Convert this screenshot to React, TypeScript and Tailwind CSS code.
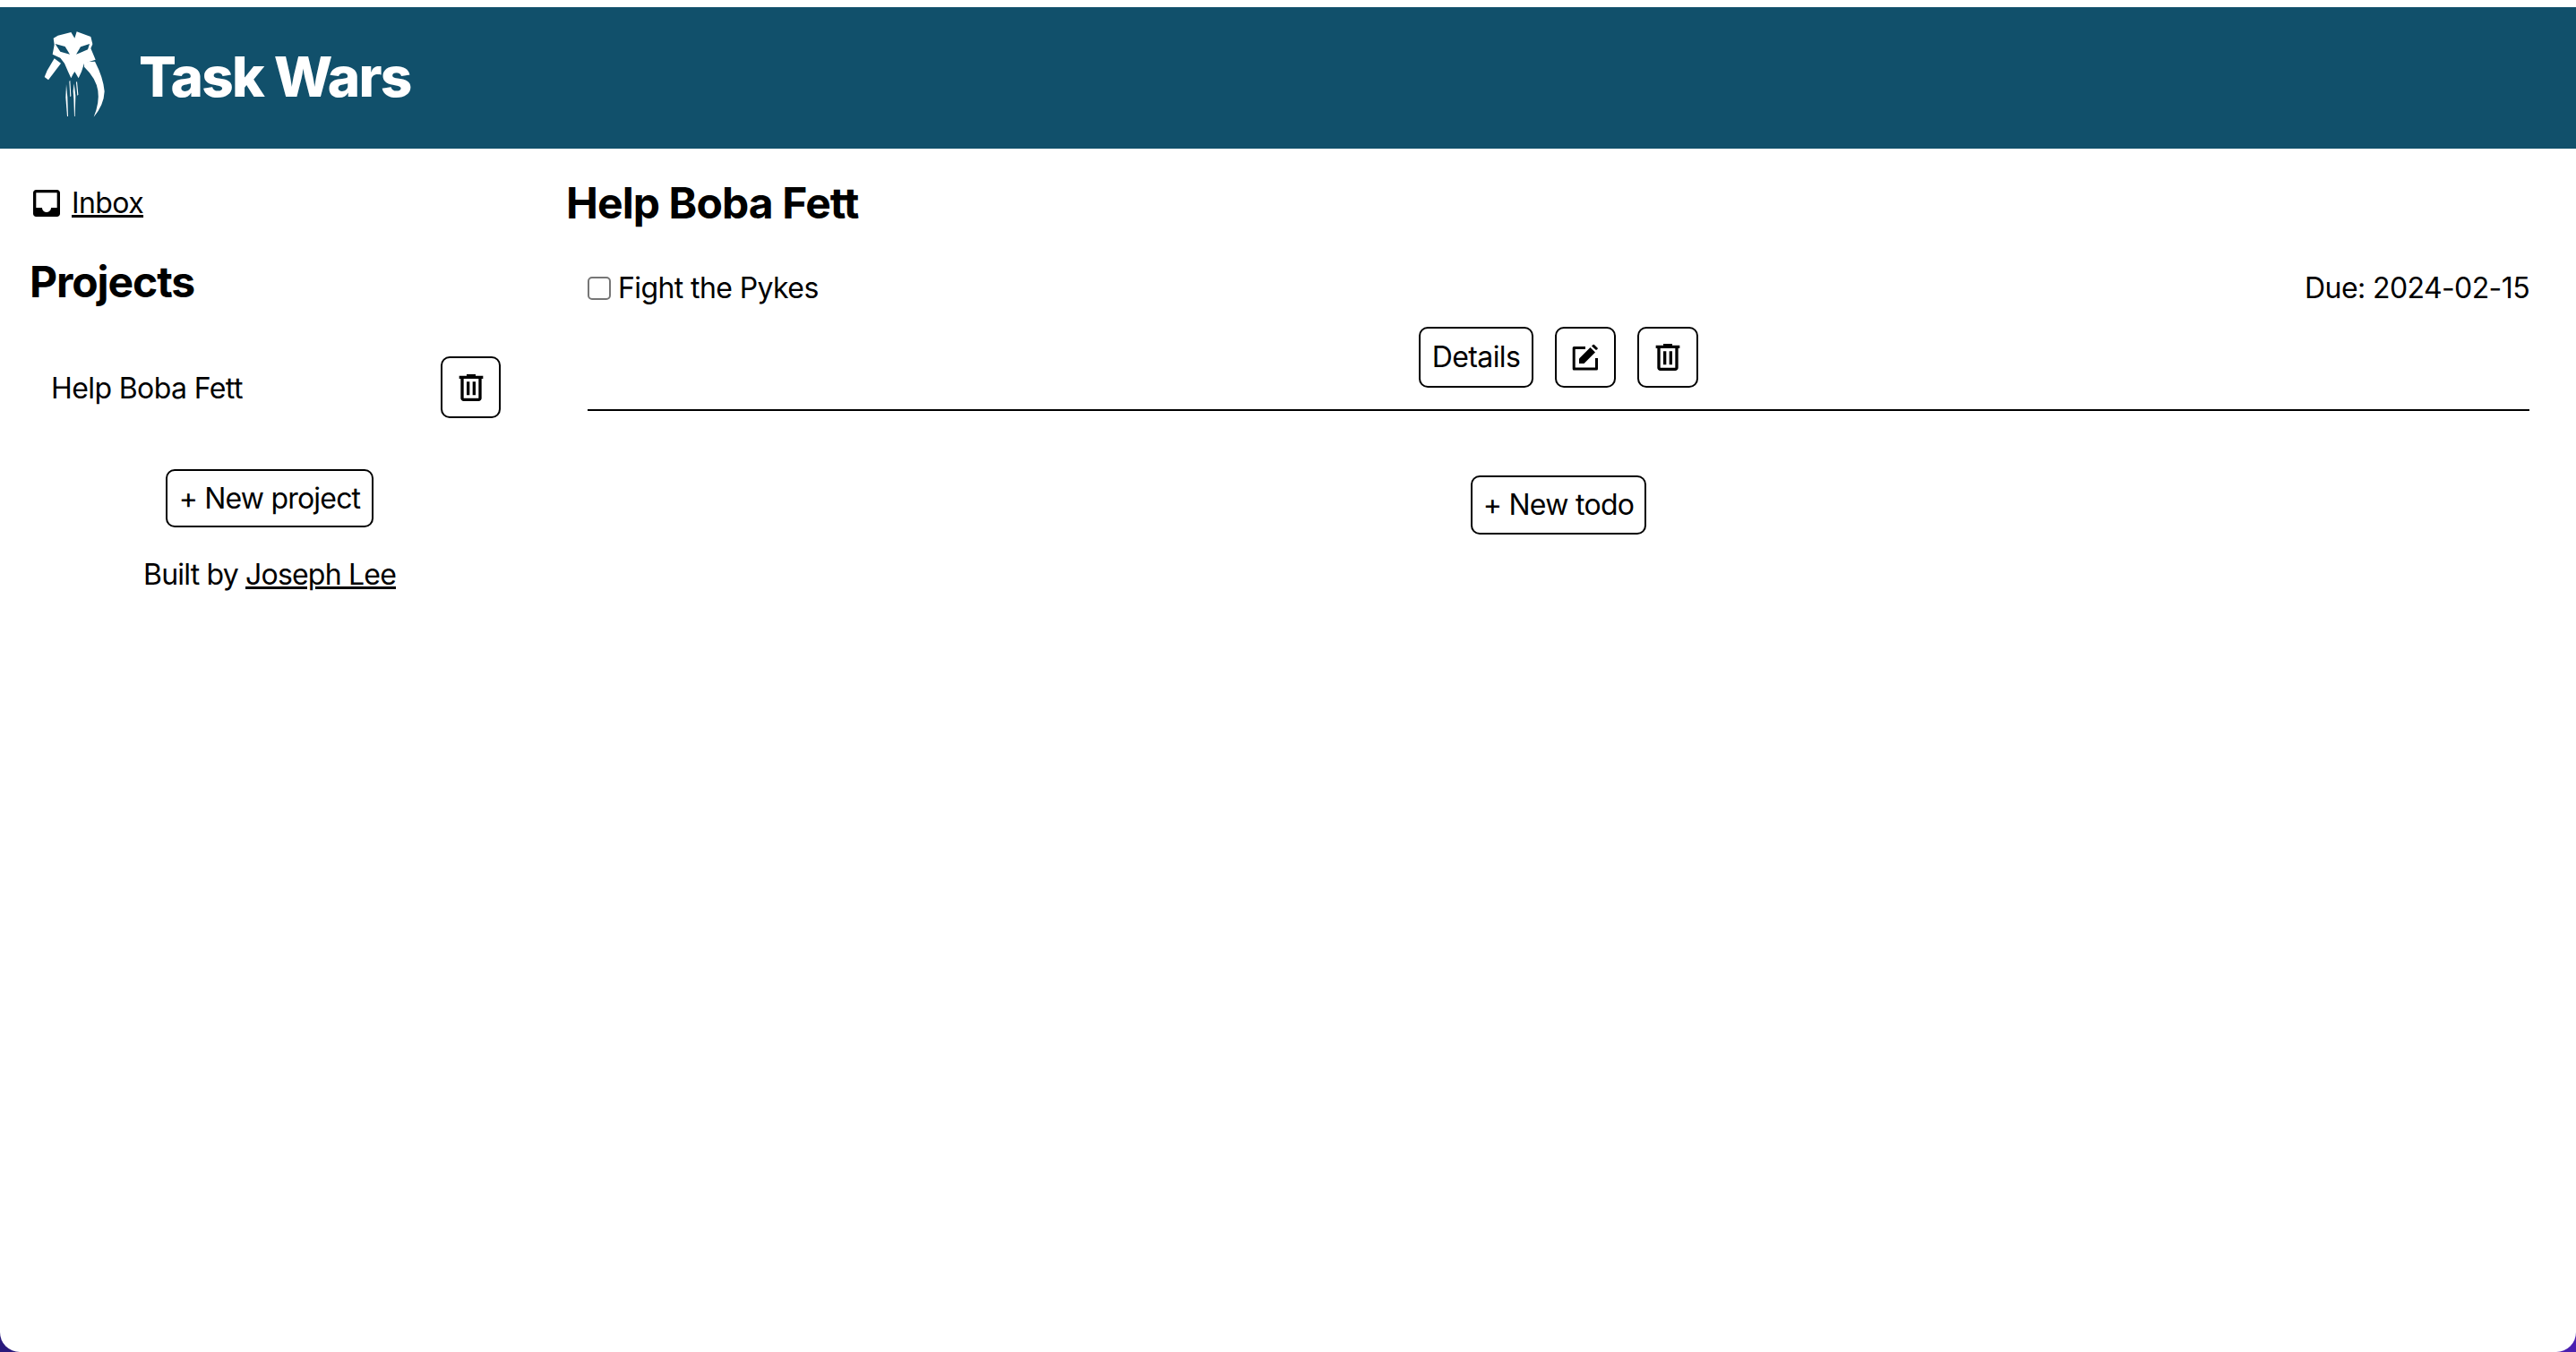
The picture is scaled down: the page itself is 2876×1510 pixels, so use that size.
import React from 'react';

const btn = "flex items-center justify-center rounded-[10px] border-2 border-black bg-white";

const TrashIcon = () => (
  <svg viewBox="0 -960 960 960" className="w-10 h-10" fill="currentColor">
    <path d="M280-120q-33 0-56.5-23.5T200-200v-520h-40v-80h200v-40h240v40h200v80h-40v520q0 33-23.5 56.5T680-120H280Zm400-600H280v520h400v-520ZM360-280h80v-360h-80v360Zm160 0h80v-360h-80v360Z" />
  </svg>
);

const EditIcon = () => (
  <svg viewBox="0 0 40 40" className="w-10 h-10" fill="none">
    <path d="M20 9.5H7.2V33h25.3V21" stroke="currentColor" strokeWidth="3" strokeLinejoin="round" />
    <path d="M13 27v-5.5L25.5 9l5.5 5.5L18.5 27z" fill="currentColor" />
    <path d="M27 7.5l1.5-1.5q.7-.7 1.4 0l3.6 3.6q.7.7 0 1.4L32 12z" fill="currentColor" />
  </svg>
);

const InboxIcon = () => (
  <svg viewBox="0 0 24 24" className="w-10 h-10 -ml-px" fill="currentColor">
    <path d="M19 3H4.99c-1.11 0-1.98.89-1.98 2L3 19c0 1.1.88 2 1.99 2H19c1.1 0 2-.9 2-2V5c0-1.11-.9-2-2-2zm0 12h-4c0 1.66-1.35 3-3 3s-3-1.34-3-3H4.99V5H19v10z" />
  </svg>
);

const Logo = () => (
  <svg viewBox="0 0 240 315" className="w-20 h-[105px] mb-[10px]" fill="#fff">
    <path
      fillRule="evenodd"
      d="M47 38 62 29 106 18 118 38 125 16 172 33 178 58 172 72 188 110 150 122 141 150 131 172 124 160 118 150 112 160 106 172 96 150 84 122 70 104 44 92 50 60ZM53 57 86 66 102 92 70 83ZM123 92 138 67 168 57 162 76 136 87Z"
    />
    <path d="M50 106 72 122 30 178 17 168 26 146Z" />
    <path d="M150 118 186 116Q214 170 218 216 216 262 182 302 202 254 196 214 190 172 150 134Z" />
    <path d="M90 192 94 236 96 300 93 300 88 236Z" />
    <path d="M100 182 103 235 106 232 103 180Z" />
    <path d="M116 190 121 230 119 300 117 300 115 240 113 215Z" />
    <path d="M126 182 130 226 127 232 123 186Z" />
  </svg>
);

export default function App() {
  return (
    <div className="h-[1510px] overflow-hidden bg-gradient-to-r from-[#2a1a7c] to-[#4a1fb0] font-['Inter',sans-serif] text-black">
      <div className="h-full bg-white rounded-b-[22px] pt-2 text-[32px] leading-[40px] tracking-[-0.6px]">
        <header className="flex items-center h-[158px] bg-[#11506b] pl-[44px] text-white">
          <Logo />
          <h1 className="ml-[31px] mb-[2px] text-[62px] leading-none font-extrabold tracking-[-1.8px]">Task Wars</h1>
        </header>

        <div className="flex">
          <aside className="w-[602px] pl-[33px] pr-[43px]">
            <div className="flex items-center mt-[41px] h-[40px] gap-[8px]">
              <InboxIcon />
              <a href="#" className="underline">Inbox</a>
            </div>
            <h2 className="mt-[38px] text-[48px] leading-[60px] font-bold tracking-[-1.1px]">Projects</h2>
            <div className="flex items-center justify-between mt-[53px] pl-6">
              <span className="pt-[2px]">Help Boba Fett</span>
              <button className={`${btn} w-[67px] h-[69px]`}><TrashIcon /></button>
            </div>
            <div className="flex flex-col items-center mt-[57px] -ml-[33px] -mr-[43px] tracking-[-0.8px]">
              <button className={`${btn} h-[65px] w-[232px] pt-px`}>+ New project</button>
              <p className="mt-[33px]">Built by <a href="#" className="underline">Joseph Lee</a></p>
            </div>
          </aside>

          <main className="flex-1 pl-[30px] pr-[52px]">
            <h2 className="mt-[31px] text-[48px] leading-[60px] font-bold tracking-[-0.9px]">Help Boba Fett</h2>
            <div className="ml-6 mt-[45px] border-b-2 border-black pb-6">
              <div className="flex items-center justify-between h-[40px]">
                <label className="flex items-center gap-[8px]">
                  <input type="checkbox" className="appearance-none w-[26px] h-[26px] rounded-[5px] border-2 border-[#767676] bg-white" />
                  Fight the Pykes
                </label>
                <span>Due: 2024-02-15</span>
              </div>
              <div className="flex items-center justify-center gap-6 mt-[23px]">
                <button className={`${btn} h-[68px] w-[128px]`}>Details</button>
                <button className={`${btn} h-[68px] w-[68px]`}><EditIcon /></button>
                <button className={`${btn} h-[68px] w-[68px]`}><TrashIcon /></button>
              </div>
            </div>
            <div className="flex justify-center mt-[72px] ml-6">
              <button className={`${btn} h-[66px] w-[196px] tracking-[-0.7px]`}>+ New todo</button>
            </div>
          </main>
        </div>
      </div>
    </div>
  );
}
